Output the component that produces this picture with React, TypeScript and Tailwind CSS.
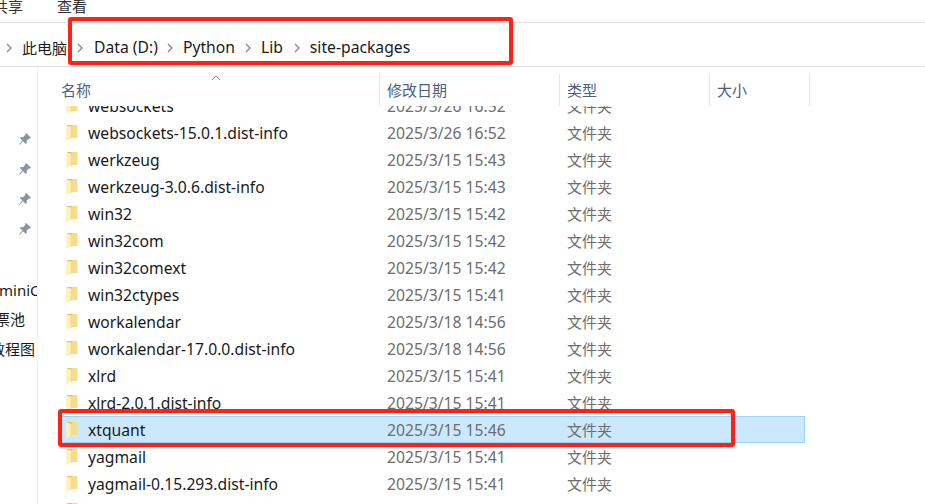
import React from 'react';

const FONT = { fontFamily: '"Noto Sans", "Noto Sans CJK SC", sans-serif' };

const ROWS = [
  { name: 'websockets', date: '2025/3/26 16:52' },
  { name: 'websockets-15.0.1.dist-info', date: '2025/3/26 16:52' },
  { name: 'werkzeug', date: '2025/3/15 15:43' },
  { name: 'werkzeug-3.0.6.dist-info', date: '2025/3/15 15:43' },
  { name: 'win32', date: '2025/3/15 15:42' },
  { name: 'win32com', date: '2025/3/15 15:42' },
  { name: 'win32comext', date: '2025/3/15 15:42' },
  { name: 'win32ctypes', date: '2025/3/15 15:41' },
  { name: 'workalendar', date: '2025/3/18 14:56' },
  { name: 'workalendar-17.0.0.dist-info', date: '2025/3/18 14:56' },
  { name: 'xlrd', date: '2025/3/15 15:41' },
  { name: 'xlrd-2.0.1.dist-info', date: '2025/3/15 15:41' },
  { name: 'xtquant', date: '2025/3/15 15:46', selected: true },
  { name: 'yagmail', date: '2025/3/15 15:41' },
  { name: 'yagmail-0.15.293.dist-info', date: '2025/3/15 15:41' },
];

function FolderIcon() {
  return (
    <svg width="12" height="17" viewBox="0 0 12 17" className="shrink-0">
      <path d="M1 1h10.5v13H1z" fill="#f8dc8a" />
      <path d="M1 1h4.5l1 1.5H1z" fill="#eac25c" />
      <path d="M0 1.5 5.5 3v11.5L0 17z" fill="#fef1c0" />
      <path d="M5.5 3v11.5l-.8.5V3z" fill="#efcf7a" />
    </svg>
  );
}

function PinIcon() {
  return (
    <svg width="14" height="14" viewBox="0 0 14 14">
      <path d="M8.2 1 13 5.8l-1 .8-1-.2-2.4 2.4.2 2.2-1 1L5.1 9.3 1.6 12.8 1 12.2l3.5-3.6L1.8 6l1-1 2.2.2 2.4-2.4-.2-1z" fill="#8b949c" />
    </svg>
  );
}

function Chevron({ className }: { className: string }) {
  return (
    <svg width="8" height="10" viewBox="0 0 8 10" className={`shrink-0 ${className}`}>
      <path d="M2 1l4 4-4 4" fill="none" stroke="#8a8a8a" strokeWidth="1.4" />
    </svg>
  );
}

function Row({ name, date, selected }: { name: string; date?: string; selected?: boolean }) {
  return (
    <div
      className={`flex items-center shrink-0 h-[27px] w-[745px] ml-[22px] border ${
        selected ? 'bg-[#cce8ff] border-[#99d1ff]' : 'border-transparent'
      }`}
    >
      <div className="w-[12px] ml-[5px] flex">
        <FolderIcon />
      </div>
      <span className="w-[299px] ml-[10px] pt-[2px] text-[15.7px] text-[#1a1a1a] whitespace-nowrap">{name}</span>
      <span className="w-[180px] pt-[2px] text-[15.7px] text-[#6d6d6d] whitespace-nowrap">{date}</span>
      {date && <span className="pt-[2px] text-[15px] text-[#6d6d6d]">文件夹</span>}
    </div>
  );
}

function HeaderCell({ label, className }: { label: string; className: string }) {
  return (
    <div className={`flex items-center shrink-0 border-r border-[#e5e5e5] text-[15px] text-[#4c607a] ${className}`}>
      {label}
    </div>
  );
}

export default function App() {
  return (
    <div className="relative w-[925px] h-[504px] overflow-hidden bg-white flex flex-col" style={FONT}>
      {/* ribbon */}
      <div className="h-[23px] shrink-0 border-b border-[#e1e1e1] flex items-center text-[15px] text-[#333] leading-none pb-[9px]">
        <span className="ml-[-7px]">共享</span>
        <span className="ml-[34px]">查看</span>
      </div>

      {/* address bar */}
      <div className="h-[44px] shrink-0 border-b border-[#e1e1e1] flex items-center text-[15.7px] text-[#1a1a1a] pt-[7px]">
        <Chevron className="ml-[5px]" />
        <span className="ml-[9px] text-[15px]">此电脑</span>
        <Chevron className="ml-[9px]" />
        <span className="ml-[10px]">Data (D:)</span>
        <Chevron className="ml-[8px]" />
        <span className="ml-[9px]">Python</span>
        <Chevron className="ml-[9px]" />
        <span className="ml-[9px]">Lib</span>
        <Chevron className="ml-[10px]" />
        <span className="ml-[9px]">site-packages</span>
      </div>

      <div className="flex flex-1 min-h-0">
        {/* nav pane */}
        <div className="w-[38px] shrink-0 border-r border-[#f0f0f0] text-[15px] text-[#1a1a1a] overflow-hidden whitespace-nowrap pt-[65px]">
          <div className="flex flex-col gap-[16px] items-end pr-[5px]">
            <PinIcon />
            <PinIcon />
            <PinIcon />
            <PinIcon />
          </div>
          <div className="mt-[44px] flex flex-col gap-[8px]">
            <span className="leading-[21px] ml-[-1px]">miniC</span>
            <span className="leading-[21px] ml-[-5px]">票池</span>
            <span className="leading-[21px] ml-[-10px] mt-[1px]">教程图</span>
          </div>
        </div>

        {/* file list */}
        <div className="flex-1 min-w-0 flex flex-col pt-[7px] overflow-hidden">
          <div className="relative flex shrink-0 h-[32px]">
            <svg width="10" height="6" viewBox="0 0 10 6" className="absolute left-[173px] top-[1px]">
              <path d="M1 5l4-4 4 4" fill="none" stroke="#9a9a9a" strokeWidth="1" />
            </svg>
            <HeaderCell label="名称" className="w-[342px] pl-[23px]" />
            <HeaderCell label="修改日期" className="w-[180px] pl-[7px]" />
            <HeaderCell label="类型" className="w-[150px] pl-[7px]" />
            <HeaderCell label="大小" className="w-[100px] pl-[7px]" />
          </div>
          {/* scrolled: the first row sits half under the header */}
          <div className="flex-1 min-h-0 overflow-hidden flex flex-col">
            <div className="flex flex-col mt-[-14px]">
              {ROWS.map(r => (
                <Row key={r.name} name={r.name} date={r.date} selected={r.selected} />
              ))}
              <Row name="" />
            </div>
          </div>
        </div>
      </div>

      {/* red annotations */}
      <div className="absolute left-[68px] top-[17px] w-[445px] h-[48px] border-[4px] border-[#ff2116] rounded-[3px]" />
      <div className="absolute left-[58px] top-[409px] w-[677px] h-[38px] border-[4px] border-[#ff2116] rounded-[3px]" />
    </div>
  );
}
